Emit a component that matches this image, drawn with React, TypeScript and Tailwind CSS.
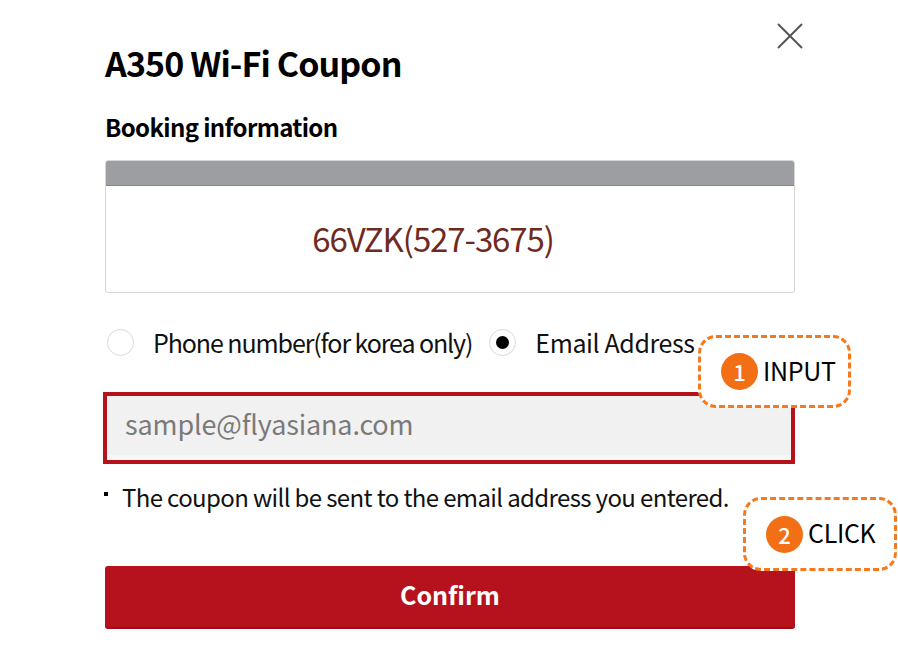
const font = { fontFamily: '"Noto Sans CJK KR", "Noto Sans", sans-serif' };

function Radio({ checked, label, className }: { checked?: boolean; label: string; className: string }) {
  return (
    <label className="flex items-center">
      <span className="flex h-[27px] w-[27px] items-center justify-center rounded-full border border-[#d9d9d9] bg-white">
        {checked ? <span className="h-[13px] w-[13px] rounded-full bg-black" /> : null}
      </span>
      <span className={`ml-[19px] text-[25px] leading-none text-[#111] ${className}`}>{label}</span>
    </label>
  );
}

function Callout({ n, text, className }: { n: number; text: string; className: string }) {
  return (
    <div
      className={`absolute flex items-center rounded-[18px] border-[3px] border-dashed border-[#f47a1f] bg-white ${className}`}
    >
      <span className="flex h-[37px] w-[37px] items-center justify-center rounded-full bg-[#f36f16] text-[22px] font-medium text-white">
        {n}
      </span>
      <span className="mb-[3px] ml-[5px] text-[25px] leading-none tracking-[-0.3px] text-black">{text}</span>
    </div>
  );
}

export default function App() {
  return (
    <div className="relative h-[660px] w-[898px] overflow-hidden bg-white" style={font}>
      <button className="absolute left-[777px] top-[23px]">
        <svg width="26" height="26" viewBox="0 0 26 26" fill="none" stroke="#555" strokeWidth="2">
          <path d="M1 1L25 25M25 1L1 25" />
        </svg>
      </button>

      <div className="ml-[105px] w-[690px] pt-[40px]">
        <h1 className="text-[34px] font-bold leading-[46px] tracking-[-0.9px] text-black">A350 Wi-Fi Coupon</h1>
        <h2 className="mt-[26px] text-[24px] font-bold leading-[30px] tracking-[-0.65px] text-black">
          Booking information
        </h2>

        <div className="mt-[18px] overflow-hidden rounded-[3px] border border-[#d6d6d6]">
          <div className="h-[25px] border-b border-[#86868a] bg-[#9d9ea2]" />
          <div className="flex h-[106px] items-center justify-center pr-[34px] text-[33px] tracking-[-1.1px] text-[#6e2a22]">
            66VZK(527-3675)
          </div>
        </div>

        <div className="mt-[36px] flex items-center gap-[17px] pl-[2px]">
          <Radio label="Phone number(for korea only)" className="tracking-[-1.1px]" />
          <Radio checked label="Email Address" className="tracking-[-0.4px]" />
        </div>

        <div className="-ml-[2px] mt-[36px] flex h-[72px] items-center border-[4px] border-[#b5121b] bg-[#f1f1f1] pb-[8px] pl-[18px] shadow-[inset_0_-5px_0_#f7f7f7]">
          <span className="text-[27px] tracking-[-0.15px] text-[#7a7a7a]">sample@flyasiana.com</span>
        </div>

        <div className="mt-[18px] flex items-center">
          <span className="-ml-[1px] mb-[6px] h-[4px] w-[4px] bg-black" />
          <span className="ml-[14px] text-[24px] leading-[30px] tracking-[-0.63px] text-[#111]">
            The coupon will be sent to the email address you entered.
          </span>
        </div>

        <button className="mt-[54px] flex h-[63px] w-full items-center justify-center rounded-[3px] border-b-2 border-[#9e0c14] bg-[#b5121e] pb-[4px] text-[25px] font-bold text-white">
          Confirm
        </button>
      </div>

      <Callout n={1} text="INPUT" className="left-[698px] top-[335px] h-[73px] w-[153px] pl-[20px]" />
      <Callout n={2} text="CLICK" className="left-[743px] top-[497px] h-[74px] w-[154px] pl-[20px]" />
    </div>
  );
}
